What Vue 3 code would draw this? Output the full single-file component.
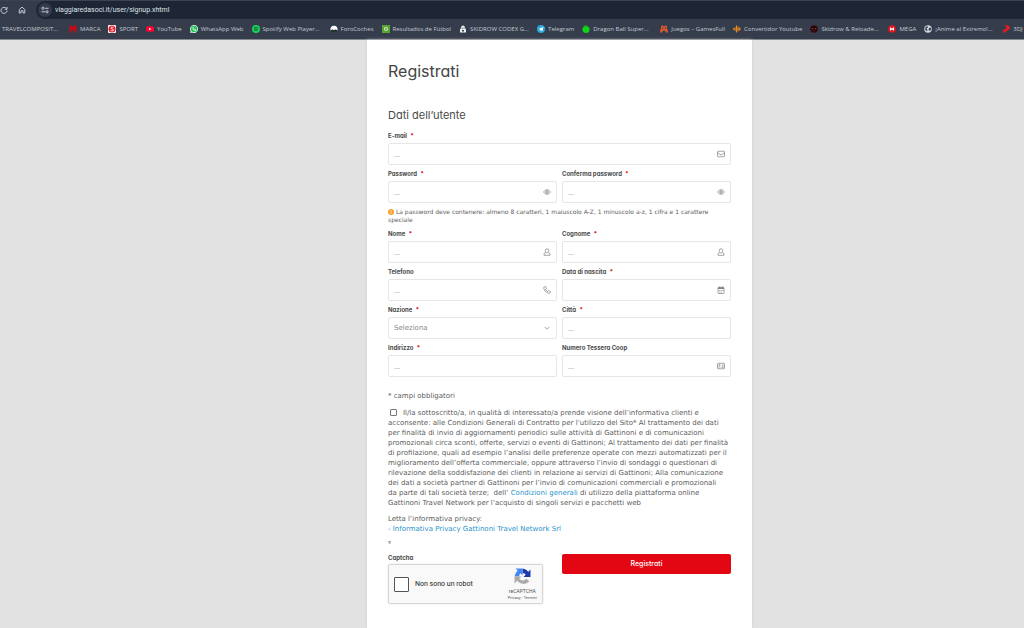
<template>
  <div class="window">
    <header class="browser">
      <div class="toolbar">
        <button class="tool-btn" type="button" aria-label="Ricarica">
          <svg viewBox="0 0 16 16"><path d="M13 5.5A6 6 0 1 0 14 9" /><path d="M14 2v4.500H9.500" /></svg>
        </button>
        <button class="tool-btn home" type="button" aria-label="Home">
          <svg viewBox="0 0 16 16"><path d="M2.500 7L8 2.200 13.500 7v7H10v-4.500H6V14H2.500z" /></svg>
        </button>
        <div class="address">
          <span class="site-info">
            <svg viewBox="0 0 16 16">
              <path d="M8 4.500h7M1 11.500h7" /><circle cx="4" cy="4.500" r="2.200" /><circle cx="12" cy="11.500" r="2.200" />
            </svg>
          </span>
          <input v-model="url" class="url" type="text" aria-label="Indirizzo web" />
        </div>
      </div>
      <nav class="bookmarks">
        <a v-for="b in bookmarks" :key="b.name" href="#" class="bookmark" :class="{ cut: b.cut }">
          <svg viewBox="0 0 16 16" class="favicon">
            <template v-if="b.icon === 'marca'">
              <path d="M1 1h5l2 4 2-4h5v14h-4V8l-3 4-3-4v7H1z" fill="#c80a14" />
            </template>
            <template v-else-if="b.icon === 'sport'">
              <rect width="16" height="16" rx="2" fill="#fff" /><circle cx="8" cy="8" r="7" fill="#e8131f" />
              <path d="M11 5.200C9 3.500 5.500 4 5.500 6s5.500 1.800 5.500 4-3.500 2.500-6 .8" fill="none" stroke="#fff" stroke-width="2" />
            </template>
            <template v-else-if="b.icon === 'youtube'">
              <rect y="2.500" width="16" height="11" rx="3" fill="#f03" /><path d="M6.300 5.500v5L10.800 8z" fill="#fff" />
            </template>
            <template v-else-if="b.icon === 'whatsapp'">
              <path d="M0 16l1.200-4A8 8 0 1 1 4 14.900z" fill="#e8f5ec" /><circle cx="8.200" cy="7.900" r="6.500" fill="#25c55a" />
              <path d="M5.500 4.300c-2 2.200 3 7.700 5.800 7 1-.4 1.200-1.500.9-1.700l-1.800-.9-1 1C8.200 9.200 7 8 6.700 7l.8-.8-.8-1.900z" fill="#fff" />
            </template>
            <template v-else-if="b.icon === 'spotify'">
              <circle cx="8" cy="8" r="8" fill="#1ed05e" />
              <path d="M3.500 5.500q5-1.500 9.300.8M4 8.300q4.200-1.200 7.800.7M4.500 10.800q3.500-.8 6.300.7" fill="none" stroke="#174428" stroke-width="1.400" />
            </template>
            <template v-else-if="b.icon === 'foro'">
              <path d="M1 11C0 5 3 1.500 8 1.500S16 5 15 11z" fill="#fff" /><path d="M1 11q3-3 7-1 4-2 7 1-2 3-7 3t-7-3z" fill="#20352f" />
            </template>
            <template v-else-if="b.icon === 'futbol'">
              <rect width="16" height="16" fill="#56a532" /><circle cx="8" cy="8" r="4" fill="#d9efcd" /><path d="M8 5.500l2.400 2-1 3H6.600l-1-3z" fill="#6cae4d" />
            </template>
            <template v-else-if="b.icon === 'codex'">
              <path d="M4 6c0-7 8-7 8 0l2 3v6H2V9z" fill="#f0f0f0" /><path d="M5.500 5.500h2v2h-2zM9 5.500h2v2H9zM6 10h4v3H6z" fill="#3a3f49" />
            </template>
            <template v-else-if="b.icon === 'telegram'">
              <circle cx="8" cy="8" r="8" fill="#2ea6de" /><path d="M3 8l9.500-4-1.600 8.500-3-2.200-1.600 1.500-.2-2.600z" fill="#fff" />
            </template>
            <template v-else-if="b.icon === 'dragon'">
              <circle cx="8" cy="9" r="7" fill="#0bd516" /><path d="M3 0l4 2 2-2 1 3-4 3z" fill="#20b820" />
            </template>
            <template v-else-if="b.icon === 'games'">
              <path d="M3 1h3l1 2h2l1-2h3l3 14h-4l-2-4H6l-2 4H0z" fill="#e85b2a" /><circle cx="5" cy="6.500" r="1.500" fill="#2f3645" /><circle cx="11" cy="6.500" r="1.500" fill="#2f3645" />
            </template>
            <template v-else-if="b.icon === 'wave'">
              <path d="M1 6.500v3M4 4.500v7M7 1v14M10 3v10M13 5v6M15.500 7v2" stroke="#f08a1d" stroke-width="2" /><path d="M0 8h16" stroke="#f08a1d" />
            </template>
            <template v-else-if="b.icon === 'skull'">
              <circle cx="8" cy="8" r="7.500" fill="#150b0d" stroke="#6a1518" /><path d="M3.500 6h3v2.500h-3zM9.500 6h3v2.500h-3z" fill="#b3262b" /><path d="M5 12q3-2 6 0" stroke="#a32327" fill="none" />
            </template>
            <template v-else-if="b.icon === 'mega'">
              <circle cx="8" cy="8" r="7.500" fill="#e9141d" /><path d="M4 11V5h1.500L8 7.500 10.500 5H12v6h-1.800V8.300L8 10.300 5.800 8.300V11z" fill="#fff" />
            </template>
            <template v-else-if="b.icon === 'globe'">
              <circle cx="8" cy="8" r="7.500" fill="#d5d9df" /><path d="M3 4l4-2 1 3-3 2 2 3-1 3-4-4zM10 6l4-1v5l-3 2-2-3z" fill="#3f4857" />
            </template>
            <template v-else-if="b.icon === 'juegos'">
              <path d="M5 1c5-1 11 1 10 5S7 14 1 15c4-3 8-5 10-8-3 3-6 4-10 5 4-3 8-5 9-8-2-2-3-3-5-3z" fill="#ec1c24" stroke="#ec1c24" />
            </template>
          </svg>
          <span>{{ b.name }}</span>
        </a>
      </nav>
    </header>

    <main class="page">
      <form class="panel" @submit.prevent>
        <h1>Registrati</h1>
        <h2>Dati dell’utente</h2>

        <div class="fields">
          <template v-for="f in fields" :key="f.id">
            <div class="field" :class="{ wide: f.wide }">
              <label :for="f.id">{{ f.label }} <span v-if="f.required" class="req">*</span></label>
              <div class="control">
                <select v-if="f.type === 'select'" :id="f.id">
                  <option>Seleziona</option>
                </select>
                <input v-else :id="f.id" :type="f.type" :placeholder="f.empty ? '' : '...'" />
                <svg v-if="f.icon" viewBox="0 0 16 16" class="icon">
                  <template v-if="f.icon === 'mail'">
                    <rect x="1" y="2.500" width="14" height="11" rx="1.500" /><path d="M1.500 5.500L6 9q2 1.500 4 0l4.500-3.500" />
                  </template>
                  <template v-else-if="f.icon === 'eye'">
                    <path d="M1 8q3-4.700 7-4.700T15 8q-3 4.700-7 4.700T1 8z" /><circle cx="8" cy="8" r="2.500" /><circle cx="8" cy="8" r=".8" />
                  </template>
                  <template v-else-if="f.icon === 'user'">
                    <path d="M4.500 5a3.500 3.500 0 0 1 7 0c0 2.500-1.500 4.500-3.500 4.500S4.500 7.500 4.500 5zM5.500 9L2 11v3.500h12V11l-3.500-2" />
                  </template>
                  <template v-else-if="f.icon === 'phone'">
                    <path d="M2 2l3-1 2 4-2 1.500q1.500 3 4.500 4.500L11 9l4 2-1 3q-1 1-3 .5Q3 12 1.500 5 1 3 2 2z" />
                  </template>
                  <template v-else-if="f.icon === 'calendar'">
                    <rect x="2" y="3" width="12" height="12" rx="1" /><path d="M2 4.500h12M5 1v3M11 1v3" stroke-width="3" /><path d="M4.500 9h2M7.500 9h2M10.500 9h2M4.500 12h2M7.500 12h2" />
                  </template>
                  <template v-else-if="f.icon === 'chevron'">
                    <path d="M3.500 6L8 10.500 12.500 6" />
                  </template>
                  <template v-else-if="f.icon === 'card'">
                    <rect x="1" y="2.500" width="14" height="11" rx="1" /><circle cx="5" cy="6.500" r="1.300" /><path d="M3 11q2-3 4 0M9.500 6H13M9.500 8.500H13M9.500 11H13" />
                  </template>
                </svg>
              </div>
            </div>
            <p v-if="f.hint" class="hint">
              <svg viewBox="0 0 16 16" class="info">
                <circle cx="8" cy="8" r="8" fill="#f6a12b" /><path d="M8 3.300v2M8 7v5.500" stroke="#fff" stroke-width="2" />
              </svg>
              {{ f.hint }}<br />speciale
            </p>
          </template>
        </div>

        <p class="note">* campi obbligatori</p>

        <div class="terms">
          <input id="terms" v-model="accepted" type="checkbox" />
          <label for="terms"><template v-for="line in terms" :key="line">{{ line }}<br /></template></label>
          da parte di tali società terze;&nbsp; dell’ <a href="#">Condizioni generali</a> di utilizzo della piattaforma online<br />
          Gattinoni Travel Network per l’acquisto di singoli servizi e pacchetti web
        </div>

        <p class="privacy">
          Letta l’informativa privacy:<br />
          <a href="#">- Informativa Privacy Gattinoni Travel Network Srl</a>
        </p>
        <p class="degree">°</p>

        <div class="bottom">
          <div>
            <div class="captcha-label">Captcha</div>
            <div class="captcha">
              <input id="robot" v-model="human" type="checkbox" />
              <label for="robot">Non sono un robot</label>
              <div class="brand">
                <svg viewBox="0 0 32 32">
                  <path d="M31 3v14H18l4-5a7 7 0 0 0-6-2V1a15 15 0 0 1 11 6z" fill="#1c3aa9" />
                  <path d="M3 1h13v13l-4-4a7 7 0 0 0-2 6H1A15 15 0 0 1 7 5z" fill="#4285f4" />
                  <path d="M1 29V16h13l-4 4a8 8 0 0 0 13 0l6 5a15 15 0 0 1-23-1z" fill="#ababab" />
                </svg>
                <span class="brand-name">reCAPTCHA</span>
                <span class="brand-links"><a href="#">Privacy</a> - <a href="#">Termini</a></span>
              </div>
            </div>
          </div>
          <button class="submit" type="submit">Registrati</button>
        </div>
      </form>
    </main>
  </div>
</template>

<script setup>
import { ref } from 'vue'

const url = ref('viaggiaredasoci.it/user/signup.xhtml')
const accepted = ref(false)
const human = ref(false)

const bookmarks = [
  { name: 'TRAVELCOMPOSIT...', icon: '', cut: true },
  { name: 'MARCA', icon: 'marca' },
  { name: 'SPORT', icon: 'sport' },
  { name: 'YouTube', icon: 'youtube' },
  { name: 'WhatsApp Web', icon: 'whatsapp' },
  { name: 'Spotify Web Player...', icon: 'spotify', cut: true },
  { name: 'ForoCoches', icon: 'foro' },
  { name: 'Resultados de Fútbol', icon: 'futbol' },
  { name: 'SKIDROW CODEX G...', icon: 'codex', cut: true },
  { name: 'Telegram', icon: 'telegram' },
  { name: 'Dragon Ball Super...', icon: 'dragon', cut: true },
  { name: 'Juegos – GamesFull', icon: 'games' },
  { name: 'Convertidor Youtube', icon: 'wave' },
  { name: 'Skidrow & Reloade...', icon: 'skull', cut: true },
  { name: 'MEGA', icon: 'mega' },
  { name: '¡Anime al Extremo!...', icon: 'globe', cut: true },
  { name: '3DJ', icon: 'juegos' }
]

const fields = [
  { id: 'email', label: 'E-mail', type: 'email', required: true, icon: 'mail', wide: true },
  { id: 'password', label: 'Password', type: 'password', required: true, icon: 'eye' },
  {
    id: 'confirm',
    label: 'Conferma password',
    type: 'password',
    required: true,
    icon: 'eye',
    hint: 'La password deve contenere: almeno 8 caratteri, 1 maiuscolo A-Z, 1 minuscolo a-z, 1 cifra e 1 carattere'
  },
  { id: 'name', label: 'Nome', type: 'text', required: true, icon: 'user' },
  { id: 'surname', label: 'Cognome', type: 'text', required: true, icon: 'user' },
  { id: 'phone', label: 'Telefono', type: 'tel', icon: 'phone' },
  { id: 'birth', label: 'Data di nascita', type: 'text', required: true, icon: 'calendar', empty: true },
  { id: 'country', label: 'Nazione', type: 'select', required: true, icon: 'chevron' },
  { id: 'city', label: 'Città', type: 'text', required: true },
  { id: 'street', label: 'Indirizzo', type: 'text', required: true },
  { id: 'coop', label: 'Numero Tessera Coop', type: 'text', icon: 'card' }
]

const terms = [
  'Il/la sottoscritto/a, in qualità di interessato/a prende visione dell’informativa clienti e',
  'acconsente: alle Condizioni Generali di Contratto per l’utilizzo del Sito* Al trattamento dei dati',
  'per finalità di invio di aggiornamenti periodici sulle attività di Gattinoni e di comunicazioni',
  'promozionali circa sconti, offerte, servizi o eventi di Gattinoni; Al trattamento dei dati per finalità',
  'di profilazione, quali ad esempio l’analisi delle preferenze operate con mezzi automatizzati per il',
  'miglioramento dell’offerta commerciale, oppure attraverso l’invio di sondaggi o questionari di',
  'rilevazione della soddisfazione dei clienti in relazione ai servizi di Gattinoni; Alla comunicazione',
  'dei dati a società partner di Gattinoni per l’invio di comunicazioni commerciali e promozionali'
]
</script>

<style>
body {
  background: #e2e2e2;
}
</style>

<style scoped>
* {
  box-sizing: border-box;
}
.window {
  min-height: 100vh;
  display: flex;
  flex-direction: column;
  overflow: hidden;
  font-family: Inter, sans-serif;
  font-feature-settings: "cv11";
  font-size: 7px;
  line-height: 10px;
  color: #5c5c5c;
}
h1, h2, p {
  margin: 0;
  font-weight: 400;
}
a {
  color: #2b94cb;
  text-decoration: none;
}
input, select, button {
  font: inherit;
  font-feature-settings: inherit;
  color: inherit;
}

/* browser chrome */
.browser {
  background: #353d4c;
  border-bottom: 1px solid #85888d;
  font-family: "Open Sans", sans-serif;
  font-feature-settings: normal;
  color: #c3c8d1;
}
.toolbar {
  display: flex;
  align-items: center;
  height: 19px;
  border-top: 1px solid #3c4453;
}
.tool-btn {
  width: 8px;
  height: 8px;
  padding: 0;
  border: none;
  background: none;
  display: flex;
}
.tool-btn.home {
  margin: 0 10px;
}
.tool-btn svg, .site-info svg {
  width: 8px;
  height: 8px;
  fill: none;
  stroke: #c3c8d1;
  stroke-width: 2;
}
.address {
  flex: 1;
  height: 18px;
  display: flex;
  align-items: center;
  gap: 3px;
  padding-left: 2px;
  background: #1e2635;
  border-radius: 9px 0 0 9px;
}
.site-info {
  width: 14px;
  height: 14px;
  display: flex;
  align-items: center;
  justify-content: center;
  border-radius: 50%;
  background: #353d4c;
}
.url {
  flex: 1;
  padding: 0;
  border: none;
  outline: none;
  background: none;
  font-family: Roboto, sans-serif;
  color: #dfe3ea;
}
.bookmarks {
  display: flex;
  align-items: center;
  gap: 8px;
  height: 20px;
  margin-left: -9px;
  font-size: 6px;
}
.bookmark {
  display: flex;
  align-items: center;
  gap: 3px;
  flex: none;
  color: #c3c8d1;
  white-space: nowrap;
}
.bookmark.cut {
  width: 70px;
}
.favicon {
  width: 8px;
  height: 8px;
  flex: none;
}

/* page */
.page {
  flex: 1;
  display: flex;
  justify-content: center;
  padding-left: 95px;
}
.panel {
  width: 100%;
  max-width: 385px;
  padding: 19px 21px 24px;
  background: #fff;
  box-shadow: 0 0 3px #ccc;
}
h1 {
  font-size: 16px;
  line-height: 24px;
  color: #444;
}
h2 {
  margin: 24px 0 7px;
  font-size: 11px;
  line-height: 16px;
  color: #4a4a4a;
}
.fields, .bottom {
  display: grid;
  grid-template-columns: 1fr 1fr;
  gap: 3px 5px;
}
.wide, .hint {
  grid-column: 1 / -1;
}
.field label, .captcha-label {
  display: block;
  margin-bottom: 1px;
  font-size: 6px;
  line-height: 12px;
  font-weight: 700;
  color: #4a4a4a;
}
.req {
  margin-left: 2px;
  color: #e30613;
}
.control {
  position: relative;
}
.control input, .control select {
  display: block;
  width: 100%;
  height: 22px;
  padding: 0 5px;
  border: 1px solid #e6e6e6;
  border-radius: 2px;
  background: #fff;
  outline: none;
  appearance: none;
  color: #888;
}
.control input::placeholder {
  color: #999;
  opacity: 1;
}
.icon {
  position: absolute;
  top: 7px;
  right: 6px;
  width: 8px;
  height: 8px;
  fill: none;
  stroke: #858585;
  stroke-width: 1.5;
  pointer-events: none;
}
.control select, .hint, .note, .terms, .privacy {
  font-family: "DejaVu Sans", sans-serif;
}
.hint {
  padding: 2px 0 1px;
  font-size: 6px;
  line-height: 8px;
  white-space: nowrap;
}
.info {
  width: 6px;
  height: 6px;
  vertical-align: -1px;
}
.note {
  margin: 14px 0 7px;
}
.terms {
  white-space: nowrap;
}
.terms input {
  width: 7px;
  height: 7px;
  margin: 0 6px 0 2px;
  border: 1px solid #777;
  border-radius: 1px;
  appearance: none;
  vertical-align: -1px;
}
.terms input:checked, .captcha input:checked {
  background: #2b94cb;
}
.privacy {
  margin: 6px 0;
}
.captcha-label {
  margin-bottom: 0;
}
.degree {
  margin-bottom: 2px;
}
.captcha {
  display: flex;
  align-items: center;
  max-width: 155px;
  height: 40px;
  padding: 0 5px;
  border: 1px solid #d6d6d6;
  border-radius: 2px;
  background: #f9f9f9;
  box-shadow: 0 0 2px #ddd;
  font-family: Roboto, sans-serif;
  color: #222;
}
.captcha input {
  width: 15px;
  height: 15px;
  margin: 0 6px 0 0;
  border: 1px solid #555;
  border-radius: 1px;
  background: #fff;
  appearance: none;
}
.captcha label {
  flex: 1;
}
.brand {
  display: flex;
  flex-direction: column;
  align-items: center;
  color: #555;
}
.brand svg {
  width: 17px;
  height: 17px;
  margin-bottom: 3px;
}
.brand-name {
  font-size: 5px;
  line-height: 7px;
}
.brand-links {
  font-size: 4px;
  line-height: 6px;
}
.brand a {
  color: inherit;
}
.submit {
  height: 20px;
  margin-top: 2px;
  border: none;
  border-radius: 2px;
  background: #e30613;
  color: #fff;
  font-weight: 500;
}
</style>
